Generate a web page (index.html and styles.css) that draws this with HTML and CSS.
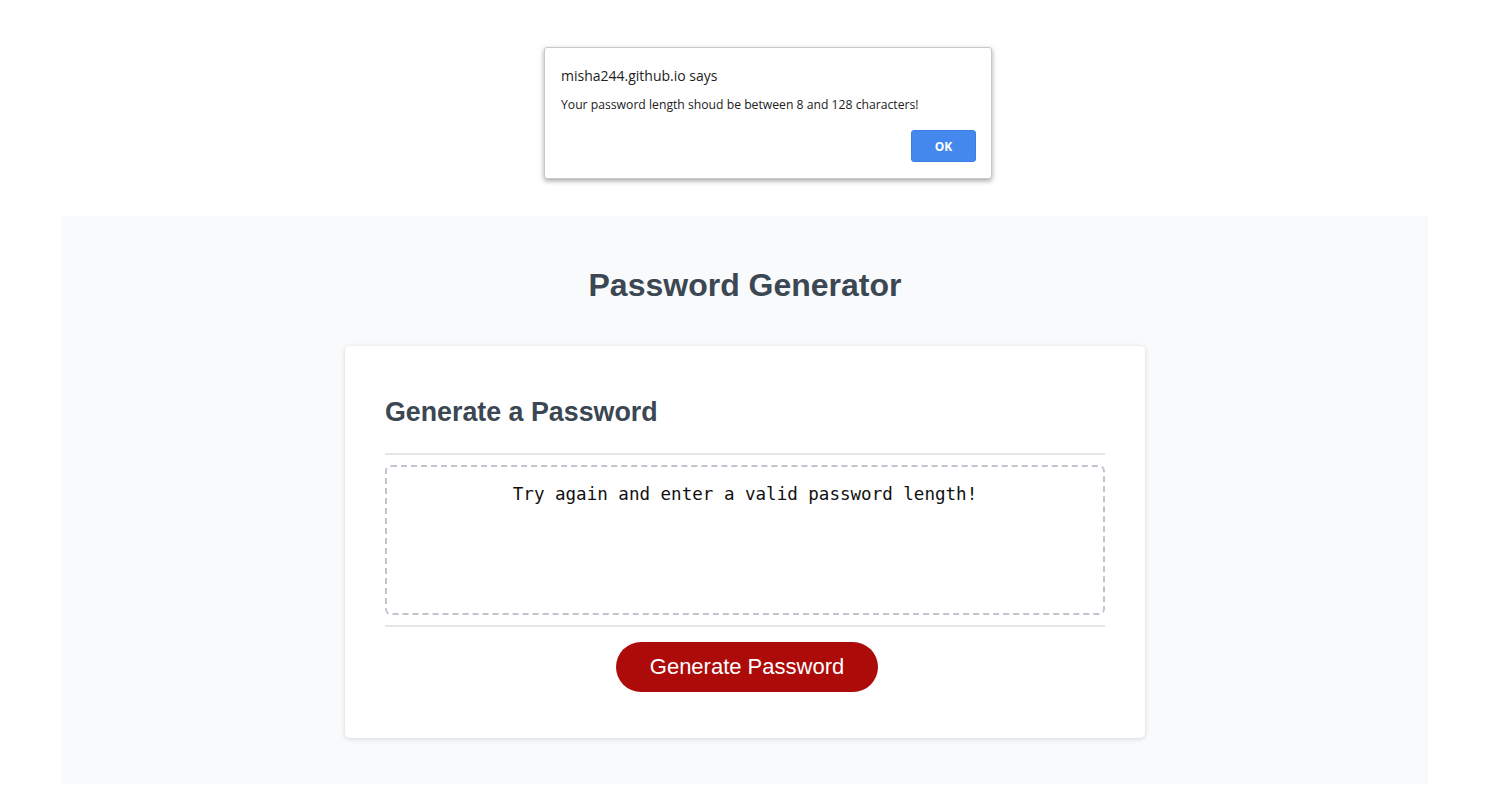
FILE: index.html
```html
<!DOCTYPE html>
<html lang="en">
<head>
<meta charset="utf-8">
<title>Password Generator</title>
<link rel="stylesheet" href="styles.css">
</head>
<body>
<div class="wrapper">
  <header class="page-header">
    <h1>Password Generator</h1>
  </header>
  <div class="card">
    <div class="card-header">
      <h2>Generate a Password</h2>
    </div>
    <div class="card-body">
      <textarea readonly class="password">Try again and enter a valid password length!</textarea>
    </div>
    <div class="card-footer">
      <button class="btn">Generate Password</button>
    </div>
  </div>
</div>
<div class="dialog">
  <div class="dialog-title">misha244.github.io says</div>
  <div class="dialog-msg">Your password length shoud be between 8 and 128 characters!</div>
  <div class="dialog-actions"><button class="ok">OK</button></div>
</div>
</body>
</html>
```

FILE: styles.css
```css
* { box-sizing: border-box; }
html, body { margin: 0; padding: 0; background: #fff; }
body {
  font-family: "Liberation Sans", Arial, sans-serif;
  width: 1500px;
  height: 800px;
  overflow: hidden;
  position: relative;
}
.wrapper {
  margin: 216px 0 0 62px;
  width: 1366px;
  height: 568px;
  background: #f9fafb;
  padding-top: 50px;
  display: flex;
  flex-direction: column;
  align-items: center;
}
.page-header h1 {
  margin: 0;
  font-size: 32px;
  font-weight: bold;
  color: #3b4752;
  line-height: 38px;
  text-align: center;
}
.card {
  margin-top: 42px;
  width: 800px;
  background: #fff;
  border-radius: 5px;
  box-shadow: 0 1px 5px rgba(0,0,0,0.15);
  padding: 0 40px;
}
.card-header {
  padding: 51px 0 25px;
  border-bottom: 2px solid #e6e6e6;
}
.card-header h2 {
  margin: 0;
  font-size: 26.8px;
  line-height: 31px;
  font-weight: bold;
  color: #3b4752;
}
.card-body {
  padding: 10px 0 10px;
  border-bottom: 2px solid #e6e6e6;
}
.password {
  display: block;
  width: 100%;
  height: 150px;
  border: 2px dashed #c0c4cc;
  border-radius: 6px;
  resize: none;
  font-family: "DejaVu Sans Mono", "Liberation Mono", monospace;
  font-size: 17.55px;
  line-height: 22px;
  text-align: center;
  color: #111;
  padding: 16px 10px;
  background: #fff;
  outline: none;
}
.card-footer {
  padding: 15px 0 46px 4px;
  display: flex;
  justify-content: center;
}
.btn {
  width: 262px;
  height: 50px;
  border: none;
  border-radius: 25px;
  background: #ad0a0a;
  color: #fff;
  font-family: "Liberation Sans", Arial, sans-serif;
  font-size: 22px;
  padding: 0;
  cursor: pointer;
}
.dialog {
  position: absolute;
  left: 544px;
  top: 47px;
  width: 448px;
  height: 132px;
  background: #fff;
  border: 1px solid #c9c9c9;
  border-radius: 3px;
  box-shadow: 0 2px 5px rgba(0,0,0,0.35);
  padding: 19px 15px 0 16px;
  font-family: "Open Sans", "Noto Sans", sans-serif;
  color: #222;
}
.dialog-title {
  font-size: 14px;
  line-height: 18px;
}
.dialog-msg {
  margin-top: 12px;
  font-size: 12.2px;
  line-height: 16px;
  color: #222;
}
.dialog-actions {
  display: flex;
  justify-content: flex-end;
  margin-top: 17px;
}
.ok {
  width: 65px;
  height: 32px;
  border: 1px solid #3b7fe6;
  border-radius: 3px;
  background: #4488ee;
  color: #fff;
  font-family: "Open Sans", "Noto Sans", sans-serif;
  font-weight: bold;
  font-size: 12px;
  padding: 0;
}
```
